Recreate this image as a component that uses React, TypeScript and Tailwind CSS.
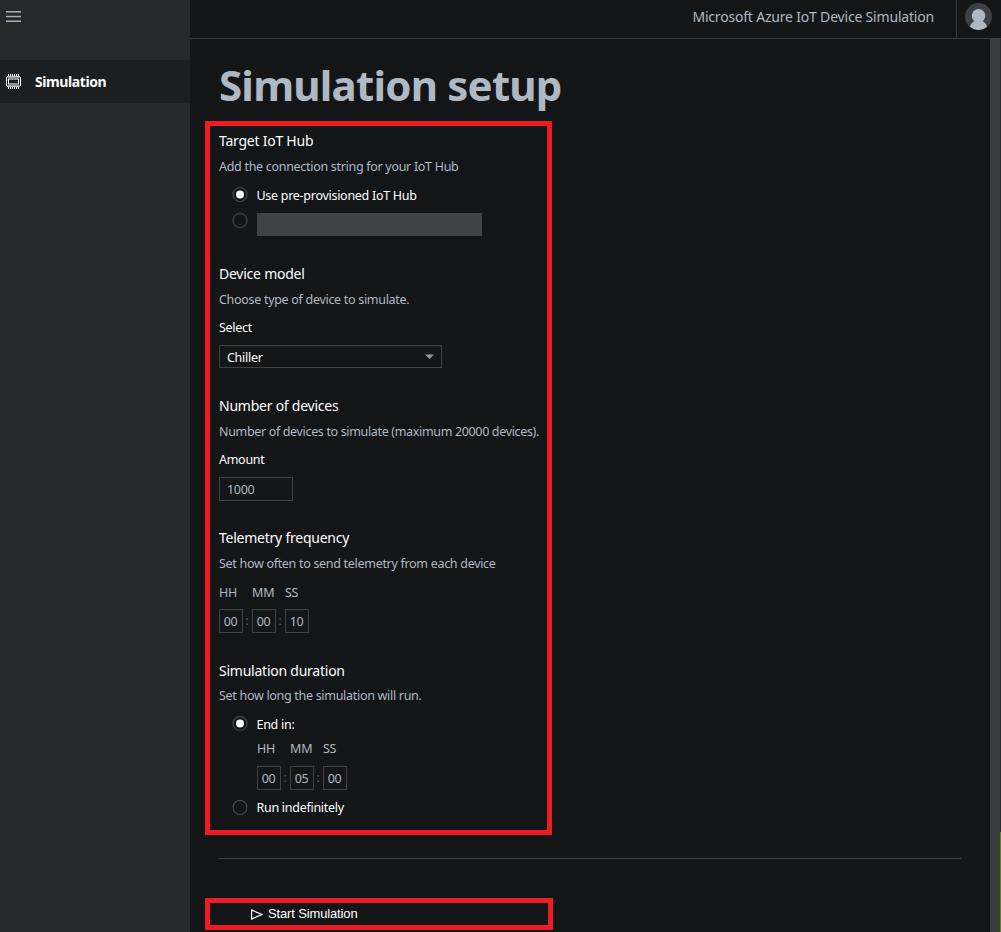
import type { ReactNode } from "react";

function Heading({ children }: { children: ReactNode }) {
  return <h2 className="h-5 whitespace-nowrap text-[14px] leading-5 tracking-[-0.24px] text-white">{children}</h2>;
}

function Hint({ children }: { children: ReactNode }) {
  return <p className="h-5 whitespace-nowrap text-[12.5px] leading-5 tracking-[-0.3px] text-[#afb9c3]">{children}</p>;
}

function Radio({ checked = false }: { checked?: boolean }) {
  return (
    <svg className="block size-4 shrink-0" viewBox="0 0 16 16">
      <circle cx="8" cy="7.5" r="7" fill="none" stroke="#46494d" strokeWidth="1.2" />
      {checked && <circle cx="8" cy="7.5" r="4" fill="#fff" />}
    </svg>
  );
}

function TimeInput({ values }: { values: [string, string, string] }) {
  return (
    <div className="flex h-6 text-[12.5px] leading-[23px] text-[#afb9c3]">
      {values.map((value, i) => (
        <div key={i} className="flex">
          {i > 0 && <span className="w-[9px] pl-[2.5px] text-[#5c6064]">:</span>}
          <span className="h-6 w-6 border border-[#404346] pr-px text-center">{value}</span>
        </div>
      ))}
    </div>
  );
}

function TimeLabels() {
  return (
    <div className="flex h-5 text-[12.5px] leading-5 text-[#afb9c3]">
      <span className="w-[33px]">HH</span>
      <span className="w-[33px] tracking-normal">MM</span>
      <span>SS</span>
    </div>
  );
}

function ChipIcon() {
  return (
    <svg className="block h-[15px] w-[15px]" viewBox="0 0 15 15" fill="none" stroke="#fff" shapeRendering="crispEdges">
      <path d="M2.5 0v2M4.500 0v2M6.500 0v2M8.500 0v2M10.500 0v2M12.500 0v2M2.500 13v2M4.500 13v2M6.500 13v2M8.500 13v2M10.500 13v2M12.500 13v2" />
      <rect x="1" y="2" width="13" height="11" fill="#8e8f90" stroke="none" />
      <path d="M1 2.500h13M1 12.500h13" stroke="#c4c4c5" />
      <path d="M.5 3v9M14.500 3v9" />
      <path d="M1.500 4v7M13.500 4v7" stroke="#1d1e20" />
      <path d="M2.500 5v5M12.500 5v5" />
      <rect x="3" y="6" width="9" height="3" fill="#1d1e20" stroke="none" />
    </svg>
  );
}

export default function App() {
  return (
    <div className="flex h-[932px] w-[1001px] overflow-hidden bg-[#141517] font-['Noto_Sans',sans-serif] tracking-[-0.28px]">
      <aside className="w-[190px] shrink-0 bg-[#27282a]">
        <div className="h-[60px] pl-[6px] pt-[11px]">
          <svg className="block h-[11px] w-[15px]" viewBox="0 0 15 11" shapeRendering="crispEdges">
            <path d="M0 .5h15M0 5.500h15M0 10.500h15" stroke="#a4adb7" />
            <path d="M0 1.500h15M0 9.500h15" stroke="#6b7076" />
            <path d="M0 4.500h15M0 6.500h15" stroke="#43474a" />
          </svg>
        </div>
        <div className="flex h-[43px] items-center bg-[#1d1e20] pl-[6px]">
          <ChipIcon />
          <span className="ml-[14px] text-[14px] font-bold tracking-[-0.4px] text-white">Simulation</span>
        </div>
      </aside>

      <div className="flex min-w-0 flex-1 flex-col">
        <header className="flex h-[39px] shrink-0 border-b border-[#3a3d40]">
          <span className="flex-1 pr-[22px] text-right text-[14px] leading-[34px] tracking-[-0.19px] text-[#afb9c3]">
            Microsoft Azure IoT Device Simulation
          </span>
          <div className="w-[45px] border-l border-[#3a3d40] pl-[8px] pt-[3px]">
            <svg className="block size-[27px]" viewBox="0 0 27 27">
              <circle cx="13.5" cy="13.5" r="13.5" fill="#3d4045" />
              <circle cx="13.5" cy="12.7" r="6.8" fill="#afb9c3" />
              <path d="M5 24c.6-3.400 3-5.500 6-6.200h5c3 .7 5.400 2.800 6 6.200a13.500 13.500 0 0 1-17 0z" fill="#afb9c3" />
            </svg>
          </div>
        </header>

        <div className="flex min-h-0 flex-1">
          <main className="min-w-0 flex-1 pl-[15px]">
            <h1 className="h-[82px] whitespace-nowrap pl-[14px] pt-[12px] text-[42px] font-bold leading-[68px] tracking-[-0.78px] text-[#afb9c3]">
              Simulation setup
            </h1>

            <div className="h-[714px] w-[347px] border-5 border-[#ed1c24] pl-[9px] pt-[5px]">
              <section className="h-[133px]">
                <Heading>Target IoT Hub</Heading>
                <div className="pt-[6px]"><Hint>Add the connection string for your IoT Hub</Hint></div>
                <div className="flex items-start pl-[13px] pt-[10px]">
                  <Radio checked />
                  <span className="-mt-px ml-[8.5px] h-5 text-[12.5px] leading-5 text-white">Use pre-provisioned IoT Hub</span>
                </div>
                <div className="flex pl-[13px] pt-[7px]">
                  <Radio />
                  <span className="ml-[9px] h-[23px] w-[225px] bg-[#404346]" />
                </div>
              </section>

              <section className="h-[132px]">
                <Heading>Device model</Heading>
                <div className="pt-[6px]"><Hint>Choose type of device to simulate.</Hint></div>
                <p className="mt-[8px] h-5 text-[12.5px] leading-5 text-white">Select</p>
                <div className="mt-[7px] flex h-[23px] w-[223px] items-center justify-between border border-[#404346] pl-[7px] pr-[7px] text-[12.5px] text-white">
                  <span className="pt-[3px]">Chiller</span>
                  <svg className="h-[5px] w-[9px]" viewBox="0 0 9 5"><path d="M0 .5h9L4.500 5z" fill="#999" /></svg>
                </div>
              </section>

              <section className="h-[132px]">
                <Heading>Number of devices</Heading>
                <div className="pt-[6px] tracking-[-0.34px]">
                  <p className="h-5 whitespace-nowrap text-[12.5px] leading-5 text-[#afb9c3]">
                    Number of devices to simulate (maximum 20000 devices).
                  </p>
                </div>
                <p className="mt-[8px] h-5 text-[12.5px] leading-5 text-white">Amount</p>
                <div className="mt-[7px] h-6 w-[74px] border border-[#404346] pl-[7px] text-[12.5px] leading-[23px] text-[#afb9c3]">1000</div>
              </section>

              <section className="h-[133px]">
                <Heading>Telemetry frequency</Heading>
                <div className="pt-[6px]"><Hint>Set how often to send telemetry from each device</Hint></div>
                <div className="pb-[6px] pt-[9px]"><TimeLabels /></div>
                <TimeInput values={["00", "00", "10"]} />
              </section>

              <section>
                <Heading>Simulation duration</Heading>
                <div className="pt-[5px]"><Hint>Set how long the simulation will run.</Hint></div>
                <div className="flex items-start pl-[13px] pt-[10px]">
                  <Radio checked />
                  <span className="-mt-px ml-[8.5px] h-5 text-[12.5px] leading-5 text-white">End in:</span>
                </div>
                <div className="pb-[7px] pl-[38px] pt-[4px]"><TimeLabels /></div>
                <div className="pl-[38px]"><TimeInput values={["00", "05", "00"]} /></div>
                <div className="flex items-start pl-[13px] pt-[10px]">
                  <Radio />
                  <span className="-mt-[2px] ml-[8.5px] h-5 text-[12.5px] leading-5 text-white">Run indefinitely</span>
                </div>
              </section>
            </div>

            <div className="ml-[14px] mt-[23px] h-px w-[742px] bg-[#404346]" />

            <button className="mt-[39px] flex h-8 w-[348px] items-center border-5 border-[#ed1c24] pl-[41px] font-['Liberation_Sans',Arial,sans-serif] text-[13px] tracking-[-0.14px] text-white">
              <svg className="h-[11px] w-3" viewBox="0 0 12 11" fill="none" stroke="#fff" strokeWidth="1.2"><path d="M.6 1v9L11 5.500z" /></svg>
              <span className="ml-[5px] leading-[20px]">Start Simulation</span>
            </button>
          </main>
          <div className="w-[10px] bg-[#3a3d40]" />
          <div className="flex w-px flex-col bg-[#2b2c2e] pt-[793px]">
            <span className="flex-1 bg-[#5b8a1e]" />
          </div>
        </div>
      </div>
    </div>
  );
}
